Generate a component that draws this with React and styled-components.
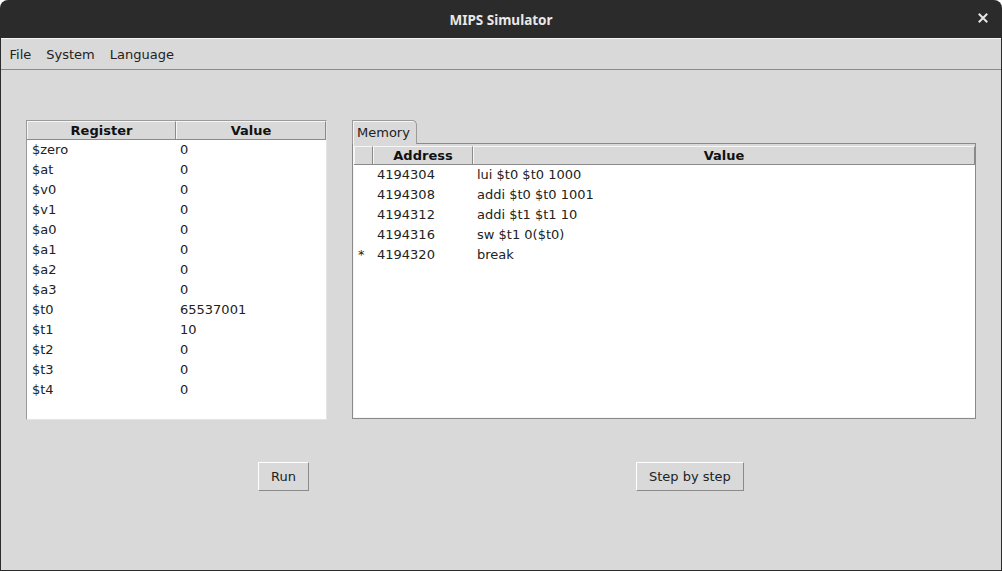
import React from 'react';
import styled, { createGlobalStyle } from 'styled-components';

const registers = [
  ['$zero', '0'],
  ['$at', '0'],
  ['$v0', '0'],
  ['$v1', '0'],
  ['$a0', '0'],
  ['$a1', '0'],
  ['$a2', '0'],
  ['$a3', '0'],
  ['$t0', '65537001'],
  ['$t1', '10'],
  ['$t2', '0'],
  ['$t3', '0'],
  ['$t4', '0'],
];

const memory = [
  ['', '4194304', 'lui $t0 $t0 1000'],
  ['', '4194308', 'addi $t0 $t0 1001'],
  ['', '4194312', 'addi $t1 $t1 10'],
  ['', '4194316', 'sw $t1 0($t0)'],
  ['*', '4194320', 'break'],
];

const App = () => {
  return (
    <>
      <GlobalStyle />
      <Window>
        <TitleBar>
          <Title>MIPS Simulator</Title>
          <CloseButton>
            <svg width="10" height="10" viewBox="0 0 10 10">
              <path d="M1.5 1.5 L8.5 8.5 M8.5 1.5 L1.5 8.5" stroke="#e6e6e6" strokeWidth="2" strokeLinecap="square" />
            </svg>
          </CloseButton>
        </TitleBar>
        <Body>
          <MenuBar>
            <MenuItem>File</MenuItem>
            <MenuItem>System</MenuItem>
            <MenuItem>Language</MenuItem>
          </MenuBar>
          <Content>
            <Panels>
              <RegisterTable>
                <HeaderRow $cols="149px 150px">
                  <HeaderCell>Register</HeaderCell>
                  <HeaderCell>Value</HeaderCell>
                </HeaderRow>
                {registers.map(([name, value]) => (
                  <Row key={name} $cols="149px 150px">
                    <Cell $pad="5px">{name}</Cell>
                    <Cell>{value}</Cell>
                  </Row>
                ))}
              </RegisterTable>

              <TabArea>
                <Tab>Memory</Tab>
                <TabPanel>
                  <MemoryTable>
                    <HeaderRow $cols="19px 100px 1fr">
                      <HeaderCell />
                      <HeaderCell>Address</HeaderCell>
                      <HeaderCell>Value</HeaderCell>
                    </HeaderRow>
                    {memory.map(([mark, addr, instr]) => (
                      <Row key={addr} $cols="19px 100px 1fr">
                        <Cell>{mark}</Cell>
                        <Cell>{addr}</Cell>
                        <Cell>{instr}</Cell>
                      </Row>
                    ))}
                  </MemoryTable>
                </TabPanel>
              </TabArea>
            </Panels>

            <Buttons>
              <Button $left="232px">Run</Button>
              <Button $left="327px">Step by step</Button>
            </Buttons>
          </Content>
        </Body>
      </Window>
    </>
  );
};

/*----------- Styled Components ----------*/
const GlobalStyle = createGlobalStyle`
  html, body {
    margin: 0;
    padding: 0;
    background: #ffffff;
  }
  body {
    font-family: "DejaVu Sans", "Noto Sans", sans-serif;
    font-size: 13px;
    color: #222222;
  }
`;

const Window = styled.div`
  width: 1002px;
  height: 571px;
  display: flex;
  flex-direction: column;
  overflow: hidden;
`;

const TitleBar = styled.div`
  position: relative;
  height: 38px;
  flex: none;
  background: #2b2b2b;
  border-radius: 8px 8px 0 0;
  display: flex;
  align-items: center;
  justify-content: center;
`;

const Title = styled.div`
  font-family: "Noto Sans", "Open Sans", sans-serif;
  font-weight: bold;
  font-size: 13.5px;
  color: #e8e8e8;
  margin-top: 1px;
`;

const CloseButton = styled.div`
  position: absolute;
  right: 14px;
  top: 13px;
  width: 10px;
  height: 10px;
  display: flex;
`;

const Body = styled.div`
  flex: 1;
  display: flex;
  flex-direction: column;
  background: #d9d9d9;
  border: 1px solid #2b2b2b;
  border-top: none;
`;

const MenuBar = styled.div`
  height: 30px;
  display: flex;
  align-items: center;
  padding-left: 1px;
  border-top: 1px solid #f4f4f4;
  border-bottom: 1px solid #8a8a8a;
`;

const MenuItem = styled.div`
  padding: 0 7.5px;
  color: #222222;
`;

const Content = styled.div`
  flex: 1;
  display: flex;
  flex-direction: column;
  padding: 50px 0 0 25px;
`;

const Panels = styled.div`
  display: flex;
  align-items: flex-start;
  gap: 25px;
`;

const RegisterTable = styled.div`
  width: 299px;
  height: 298px;
  background: #ffffff;
  border-top: 1px solid #9a9a9a;
  border-left: 1px solid #9a9a9a;
  border-right: 1px solid #e4e4e4;
  border-bottom: 1px solid #e4e4e4;
`;

const HeaderRow = styled.div`
  display: grid;
  grid-template-columns: ${(p) => p.$cols};
  height: 18px;
  background: #d9d9d9;
  border-bottom: 1px solid #8a8a8a;
`;

const HeaderCell = styled.div`
  display: flex;
  align-items: center;
  justify-content: center;
  font-weight: bold;
  color: #111111;
  border-left: 1px solid #f6f6f6;
  border-top: 1px solid #f6f6f6;
  border-right: 1px solid #8a8a8a;
`;

const Row = styled.div`
  display: grid;
  grid-template-columns: ${(p) => p.$cols};
  box-sizing: border-box;
  height: 20px;
  padding-bottom: 2px;
`;

const Cell = styled.div`
  display: flex;
  align-items: center;
  padding-left: ${(p) => p.$pad || '4px'};
  color: #222222;
  white-space: nowrap;
`;

const TabArea = styled.div`
  display: flex;
  flex-direction: column;
  align-items: flex-start;
`;

const Tab = styled.div`
  height: 23px;
  width: 59px;
  padding-left: 4px;
  display: flex;
  align-items: center;
  background: #d9d9d9;
  border: 1px solid #9a9a9a;
  border-bottom: none;
  border-radius: 0 5px 0 0;
  box-shadow: inset 1px 1px 0 #f6f6f6;
  margin-bottom: -1px;
  position: relative;
  z-index: 1;
`;

const TabPanel = styled.div`
  width: 621px;
  height: 272px;
  padding: 2px 0 0 1px;
  border: 1px solid #8a8a8a;
  box-shadow: inset 1px 0 0 #f6f6f6, inset 0 -1px 0 #f6f6f6;
`;

const MemoryTable = styled.div`
  height: 271px;
  background: #ffffff;
`;

const Buttons = styled.div`
  display: flex;
  margin-top: 42px;
`;

const Button = styled.button`
  height: 29px;
  margin-left: ${(p) => p.$left};
  padding: 0 12px;
  font-family: "DejaVu Sans", sans-serif;
  font-size: 13px;
  color: #222222;
  background: #d9d9d9;
  border: 1px solid;
  border-color: #ffffff #8a8a8a #8a8a8a #ffffff;
  outline: none;
  cursor: pointer;

  &:hover {
    background: #e2e2e2;
  }
`;

export default App;
